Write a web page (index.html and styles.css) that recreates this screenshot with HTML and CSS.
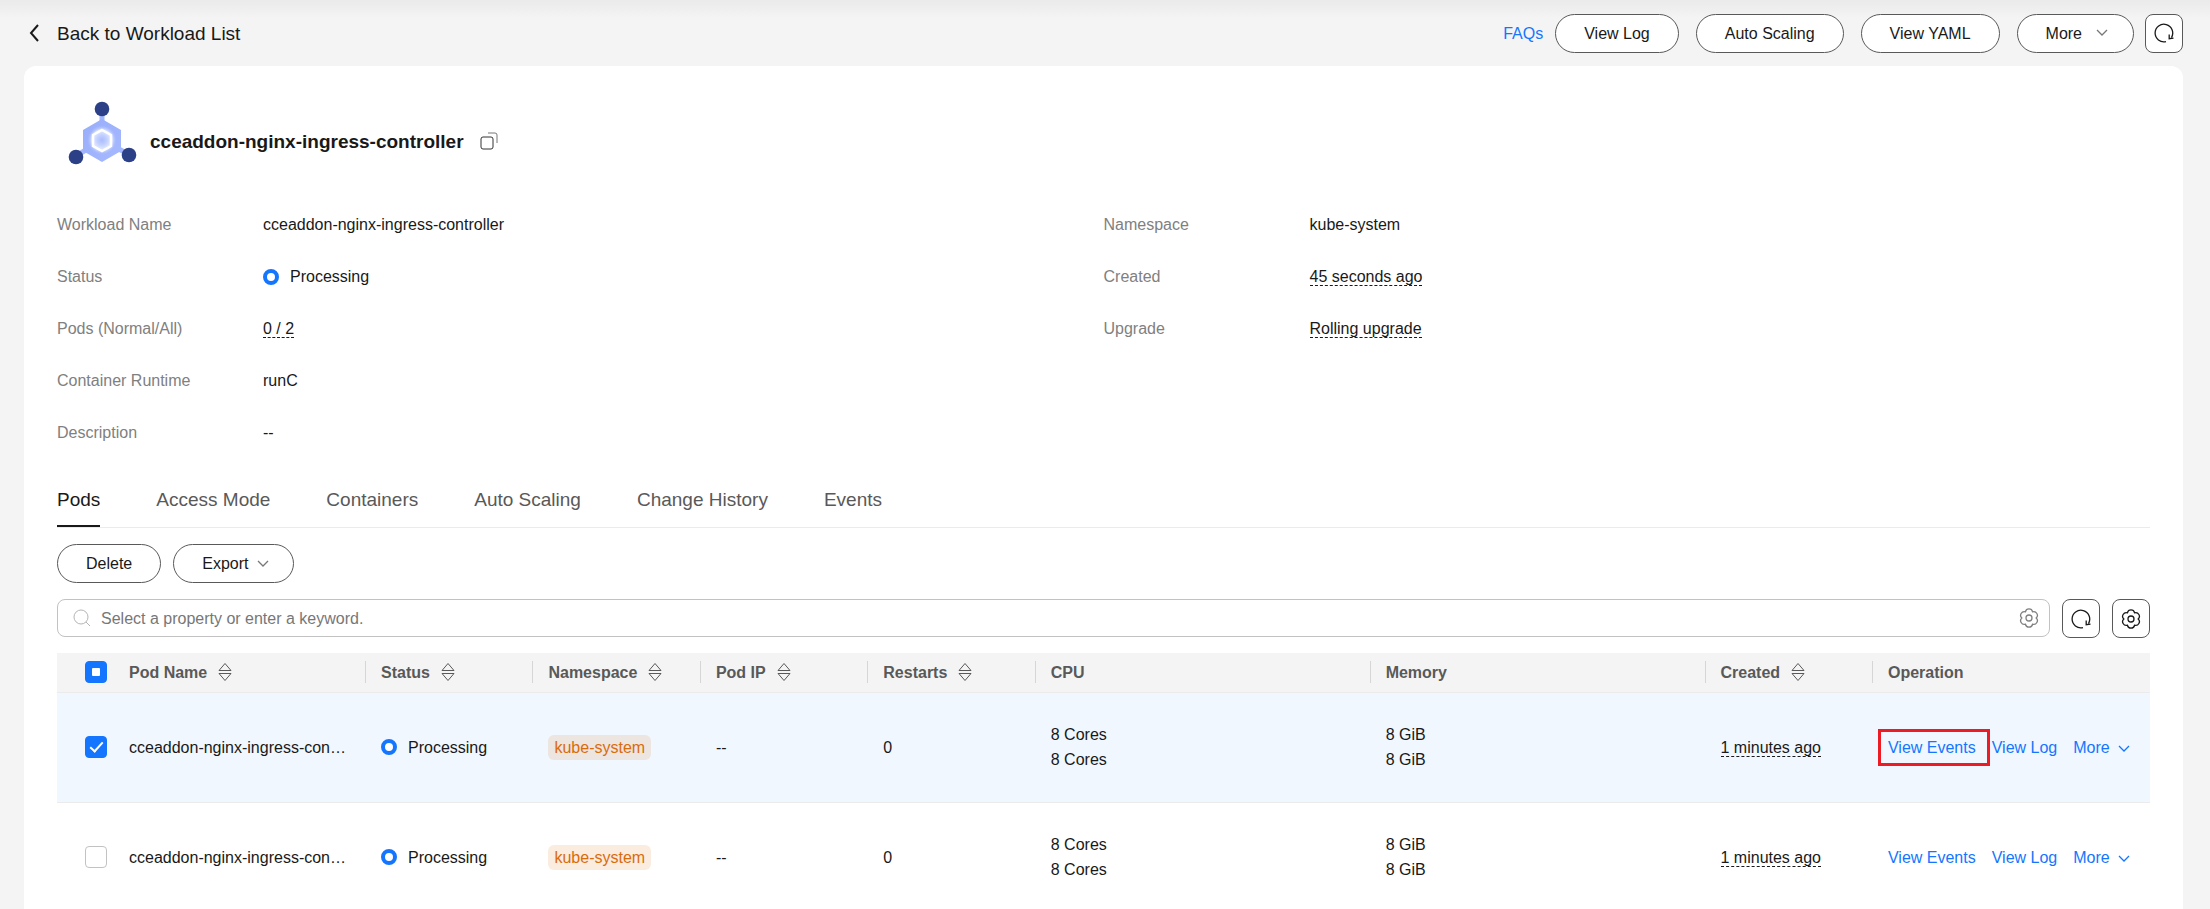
FILE: index.html
```html
<!DOCTYPE html>
<html lang="en">
<head>
    <meta charset="UTF-8">
    <meta name="viewport" content="width=device-width, initial-scale=1.0">
    <title>cceaddon-nginx-ingress-controller</title>
    <link rel="stylesheet" href="styles.css">
</head>
<body>
    <!-- shared icons -->
    <svg class="sprite" aria-hidden="true">
        <symbol id="i-down" viewBox="0 0 12 8"><path d="M1 1l5 5 5-5"/></symbol>
        <symbol id="i-refresh" viewBox="0 0 20 20"><path d="M12 18.600A8.800 8.800 0 1 1 17.500 14.500M15.200 11.500v4.200l4.300-.5"/></symbol>
        <symbol id="i-gear" viewBox="0 0 20 20"><path d="M17.200 10A3.700 3.700 0 0 1 13.600 16.240A3.700 3.700 0 0 1 6.400 16.240A3.700 3.700 0 0 1 2.800 10A3.700 3.700 0 0 1 6.400 3.760A3.700 3.700 0 0 1 13.600 3.760A3.700 3.700 0 0 1 17.200 10z"/><circle cx="10" cy="10" r="3"/></symbol>
        <symbol id="i-sort" viewBox="0 0 14 20"><path d="M7 1.500L13 8.500H1zM1 11.500h12L7 18.500z"/></symbol>
    </svg>

    <header class="topbar">
        <a class="back" href="#">
            <svg class="back-icon" viewBox="0 0 10 18"><path d="M9 1L2 9l7 8"/></svg>
            Back to Workload List
        </a>
        <div class="actions">
            <a class="faqs" href="#">FAQs</a>
            <button class="btn">View Log</button>
            <button class="btn">Auto Scaling</button>
            <button class="btn">View YAML</button>
            <button class="btn btn-more">More <svg class="down"><use href="#i-down"/></svg></button>
            <button class="icon-btn" aria-label="Refresh"><svg class="icon"><use href="#i-refresh"/></svg></button>
        </div>
    </header>

    <main class="card">
        <div class="title">
            <svg class="logo" viewBox="0 0 70 66">
                <defs>
                    <linearGradient id="hex" x1="0" y1="0" x2="1" y2="1">
                        <stop offset="0" stop-color="#98adfa"/>
                        <stop offset="1" stop-color="#a6b9ff"/>
                    </linearGradient>
                    <radialGradient id="glow">
                        <stop offset="0" stop-color="#a9bcff"/>
                        <stop offset=".3" stop-color="#c0ceff"/>
                        <stop offset=".65" stop-color="#e6ebff"/>
                        <stop offset="1" stop-color="#a3b6ff" stop-opacity="0"/>
                    </radialGradient>
                </defs>
                <path d="M34 9v12M34 40L8 56M34 40l28 15" stroke="#a3b6ff" stroke-width="5"/>
                <path d="M34 19l19 11v21L34 62 15 51V30z" fill="url(#hex)"/>
                <circle cx="34" cy="40" r="15" fill="url(#glow)"/>
                <path d="M34 30l9 5v11l-9 5-9-5V35z" fill="none" stroke="#fff" stroke-width="2.500"/>
                <circle cx="34" cy="9" r="7.300" fill="#2c4087"/>
                <circle cx="8" cy="57" r="7.300" fill="#2c4087"/>
                <circle cx="61" cy="55" r="7.300" fill="#2c4087"/>
            </svg>
            <h1>cceaddon-nginx-ingress-controller</h1>
            <svg class="copy" viewBox="0 0 18 18"><rect x="1" y="5" width="12" height="12" rx="2"/><path class="copy-back" d="M8 1h7a2 2 0 0 1 2 2v8"/></svg>
        </div>

        <div class="details">
            <dl>
                <dt>Workload Name</dt><dd>cceaddon-nginx-ingress-controller</dd>
                <dt>Status</dt><dd class="status">Processing</dd>
                <dt>Pods (Normal/All)</dt><dd><span class="tip">0 / 2</span></dd>
                <dt>Container Runtime</dt><dd>runC</dd>
                <dt>Description</dt><dd>--</dd>
            </dl>
            <dl>
                <dt>Namespace</dt><dd>kube-system</dd>
                <dt>Created</dt><dd><span class="tip">45 seconds ago</span></dd>
                <dt>Upgrade</dt><dd><span class="tip">Rolling upgrade</span></dd>
            </dl>
        </div>

        <nav class="tabs">
            <a class="active" href="#">Pods</a>
            <a href="#">Access Mode</a>
            <a href="#">Containers</a>
            <a href="#">Auto Scaling</a>
            <a href="#">Change History</a>
            <a href="#">Events</a>
        </nav>

        <div class="toolbar">
            <button class="btn">Delete</button>
            <button class="btn">Export <svg class="down"><use href="#i-down"/></svg></button>
        </div>

        <div class="filter">
            <div class="search">
                <svg class="search-icon" viewBox="0 0 18 18"><circle cx="8" cy="8" r="7"/><path d="M13 13l4 4"/></svg>
                <input type="text" aria-label="Search" placeholder="Select a property or enter a keyword.">
                <svg class="icon icon-muted"><use href="#i-gear"/></svg>
            </div>
            <button class="icon-btn" aria-label="Refresh"><svg class="icon"><use href="#i-refresh"/></svg></button>
            <button class="icon-btn" aria-label="Settings"><svg class="icon"><use href="#i-gear"/></svg></button>
        </div>

        <table class="pods">
            <colgroup>
                <col class="c-check"><col class="c-name"><col class="c-sm"><col class="c-sm"><col class="c-sm"><col class="c-sm">
                <col class="c-lg"><col class="c-lg"><col class="c-sm"><col>
            </colgroup>
            <thead>
                <tr>
                    <th class="check"><input class="partial" type="checkbox" aria-label="Select all"></th>
                    <th class="first"><div>Pod Name <svg class="sort"><use href="#i-sort"/></svg></div></th>
                    <th><div>Status <svg class="sort"><use href="#i-sort"/></svg></div></th>
                    <th><div>Namespace <svg class="sort"><use href="#i-sort"/></svg></div></th>
                    <th><div>Pod IP <svg class="sort"><use href="#i-sort"/></svg></div></th>
                    <th><div>Restarts <svg class="sort"><use href="#i-sort"/></svg></div></th>
                    <th><div>CPU</div></th>
                    <th><div>Memory</div></th>
                    <th><div>Created <svg class="sort"><use href="#i-sort"/></svg></div></th>
                    <th><div>Operation</div></th>
                </tr>
            </thead>
            <tbody>
                <tr class="selected">
                    <td class="check"><input type="checkbox" aria-label="Select pod" checked></td>
                    <td>cceaddon-nginx-ingress-con…</td>
                    <td><span class="status">Processing</span></td>
                    <td><span class="tag">kube-system</span></td>
                    <td>--</td>
                    <td>0</td>
                    <td>8 Cores<br>8 Cores</td>
                    <td>8 GiB<br>8 GiB</td>
                    <td><span class="tip">1 minutes ago</span></td>
                    <td>
                        <div class="ops">
                            <a class="marked" href="#">View Events</a>
                            <a href="#">View Log</a>
                            <a href="#">More <svg class="down"><use href="#i-down"/></svg></a>
                        </div>
                    </td>
                </tr>
                <tr>
                    <td class="check"><input type="checkbox" aria-label="Select pod"></td>
                    <td>cceaddon-nginx-ingress-con…</td>
                    <td><span class="status">Processing</span></td>
                    <td><span class="tag">kube-system</span></td>
                    <td>--</td>
                    <td>0</td>
                    <td>8 Cores<br>8 Cores</td>
                    <td>8 GiB<br>8 GiB</td>
                    <td><span class="tip">1 minutes ago</span></td>
                    <td>
                        <div class="ops">
                            <a href="#">View Events</a>
                            <a href="#">View Log</a>
                            <a href="#">More <svg class="down"><use href="#i-down"/></svg></a>
                        </div>
                    </td>
                </tr>
            </tbody>
        </table>
    </main>
</body>
</html>
```
FILE: styles.css
```css
*,
*::before,
*::after {
    box-sizing: border-box;
}
body {
    margin: 0;
    padding: 0 27px 0 24px;
    font-family: "Liberation Sans", Arial, sans-serif;
    font-size: 16px;
    line-height: 25px;
    color: #191919;
    background: #f4f4f4 linear-gradient(#eaeaea, #f4f4f4) no-repeat 0 0 / 100% 18px;
}
a {
    color: #1476ff;
    text-decoration: none;
}
svg {
    fill: none;
    stroke: currentColor;
    flex: none;
}
.sprite {
    display: none;
}
.topbar {
    display: flex;
    justify-content: space-between;
    align-items: center;
    height: 66px;
}
.back {
    display: flex;
    align-items: center;
    gap: 18px;
    padding-left: 5px;
    font-size: 19px;
    color: #191919;
}
.back-icon {
    width: 10px;
    height: 18px;
    stroke-width: 2;
}
.actions {
    display: flex;
    align-items: center;
    gap: 17px;
}
.faqs {
    margin-right: -5px;
}
.btn {
    display: flex;
    align-items: center;
    gap: 12px;
    height: 39px;
    padding: 0 28px;
    font: inherit;
    color: #191919;
    background: #fff;
    border: 1px solid #595959;
    border-radius: 20px;
    cursor: pointer;
}
.btn-more {
    gap: 14px;
    margin-right: -6px;
    padding: 0 25px 0 28px;
}
.down {
    width: 12px;
    height: 8px;
    stroke-width: 1.3;
}
.btn .down {
    color: #777;
}
.icon-btn {
    display: flex;
    align-items: center;
    justify-content: center;
    width: 38px;
    height: 39px;
    padding: 0;
    color: #191919;
    background: #fff;
    border: 1px solid #595959;
    border-radius: 8px;
    cursor: pointer;
}
.icon {
    width: 20px;
    height: 20px;
    stroke-width: 1.3;
}
.icon-muted {
    color: #808080;
}

.card {
    padding: 34px 33px 0;
    background: #fff;
    border-radius: 12px 12px 0 0;
}
.title {
    display: flex;
    align-items: center;
    gap: 12px;
    height: 82px;
    padding-left: 11px;
}
.logo {
    align-self: flex-start;
    width: 70px;
    height: 66px;
    stroke: none;
}
h1 {
    margin: 0;
    font-size: 19px;
}
.copy {
    width: 18px;
    height: 18px;
    margin-left: 4px;
    color: #333;
}
.copy-back {
    stroke: #777;
}

.details {
    display: grid;
    grid-template-columns: 1fr 1fr;
    padding: 30px 0 42px;
}
dl {
    display: grid;
    grid-template-columns: 206px 1fr;
    grid-auto-rows: 25px;
    align-content: start;
    row-gap: 27px;
    margin: 0;
}
dt {
    color: #808080;
}
dd {
    margin: 0;
}
.status {
    display: flex;
    align-items: center;
    gap: 11px;
}
.status::before {
    content: "";
    width: 16px;
    height: 16px;
    border: 4px solid #1476ff;
    border-radius: 50%;
    background: #fff;
}
.tip {
    border-bottom: 1px dashed #191919;
}

.tabs {
    display: flex;
    gap: 56px;
    height: 41px;
    font-size: 19px;
    border-bottom: 1px solid #ebebeb;
}
.tabs a {
    color: #595959;
}
.tabs .active {
    color: #191919;
    border-bottom: 2px solid #191919;
}
.toolbar {
    display: flex;
    gap: 12px;
    padding: 16px 0;
}
.toolbar .btn {
    gap: 8px;
}
.toolbar .btn + .btn {
    padding-right: 24px;
}
.filter {
    display: flex;
    gap: 12px;
    margin-bottom: 15px;
}
.search {
    display: flex;
    flex: 1;
    align-items: center;
    gap: 10px;
    height: 38px;
    padding: 0 10px 0 15px;
    border: 1px solid #c2c2c2;
    border-radius: 8px;
}
.search-icon {
    width: 18px;
    height: 18px;
    color: #b5b5b5;
}
.search input {
    flex: 1;
    padding: 0;
    font: inherit;
    border: 0;
    outline: 0;
}
.search input::placeholder {
    color: #777;
}

.pods {
    width: 100%;
    table-layout: fixed;
    border-collapse: collapse;
}
.c-check {
    width: 56px;
}
.c-name {
    width: 252px;
}
.c-sm {
    width: 8%;
}
.c-lg {
    width: 16%;
}
.pods tr {
    border-bottom: 1px solid #ebebeb;
}
th {
    height: 39px;
    padding: 0;
    text-align: left;
    color: #595959;
    background: #f4f4f4;
}
th div {
    display: flex;
    align-items: center;
    gap: 11px;
    height: 22px;
    padding-left: 15px;
    border-left: 1px solid #d6d6d6;
}
th.first div {
    border-color: transparent;
}
.sort {
    width: 14px;
    height: 20px;
}
td {
    height: 110px;
    padding: 0 0 0 16px;
    white-space: nowrap;
}
.selected {
    background: #f0f7ff;
}
.check {
    padding: 0 0 0 28px;
}
.check input {
    display: flex;
    align-items: center;
    justify-content: center;
    appearance: none;
    width: 22px;
    height: 22px;
    margin: 0;
    background: #fff;
    border: 1px solid #c2c2c2;
    border-radius: 4px;
}
.check input:checked,
.check .partial {
    background: #1476ff;
    border-color: #1476ff;
}
.check .partial::after {
    content: "";
    width: 8px;
    height: 8px;
    background: #fff;
    border-radius: 1px;
}
.check input:checked::after {
    content: "";
    width: 7px;
    height: 13px;
    margin-bottom: 4px;
    border: solid #fff;
    border-width: 0 2px 2px 0;
    transform: rotate(42deg);
}
.tag {
    display: inline-block;
    padding: 0 6px;
    color: #db6b0b;
    background: rgba(219, 107, 11, 0.13);
    border-radius: 6px;
}
.ops {
    display: flex;
    gap: 16px;
}
.ops .down {
    margin-left: 4px;
}
.marked {
    position: relative;
}
/* red frame over the link */
.marked::after {
    content: "";
    position: absolute;
    inset: -6px -14px -6px -10px;
    border: 3px solid #ed1c24;
}
```
